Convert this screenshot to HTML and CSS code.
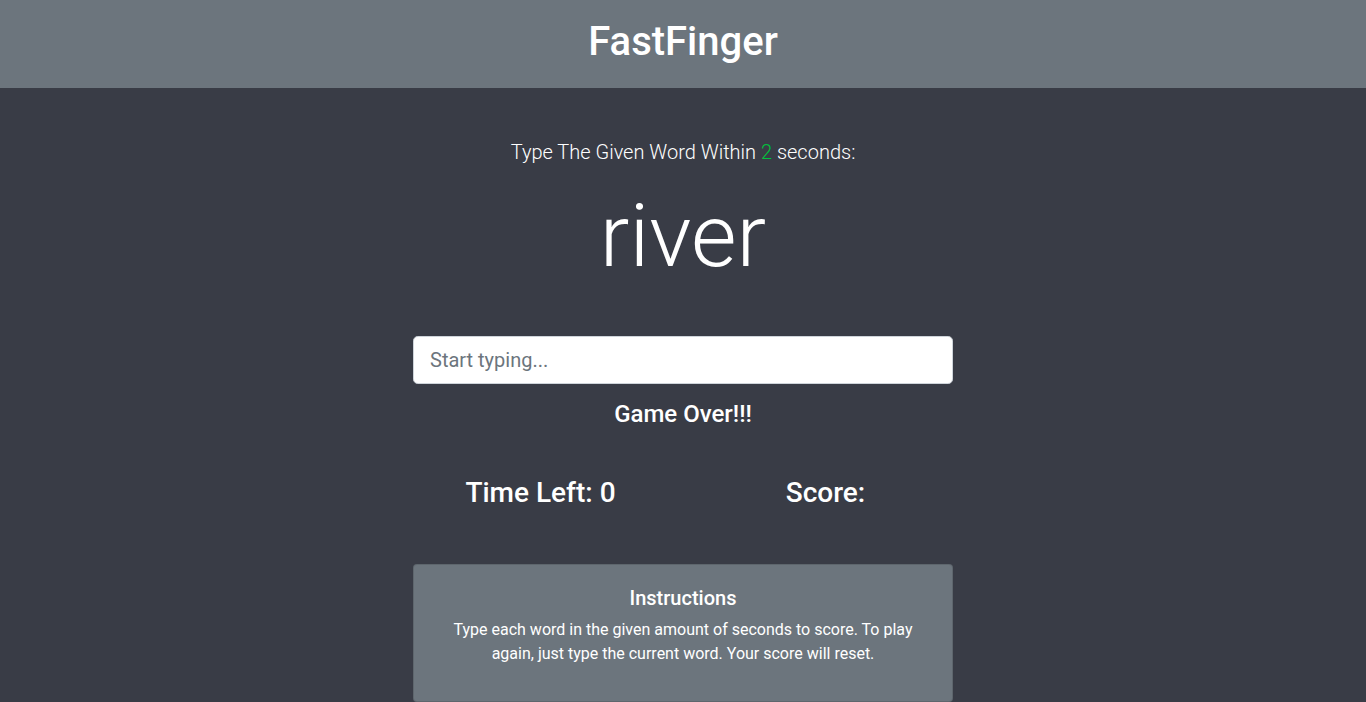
FILE: index.html
```
<!DOCTYPE html>
<html lang="en">
<head>
<meta charset="utf-8">
<title>FastFinger</title>
<link rel="stylesheet" href="styles.css">
</head>
<body>
<header class="topbar">
  <h1 class="brand">FastFinger</h1>
</header>
<main class="container">
  <div class="column">
    <p class="lead">Type The Given Word Within <span class="secs">2</span> seconds:</p>
    <h2 class="word">river</h2>
    <input class="word-input" type="text" placeholder="Start typing...">
    <h4 class="message">Game Over!!!</h4>
  </div>
  <div class="stats">
    <h3 class="stat">Time Left: <span>0</span></h3>
    <h3 class="stat">Score: <span></span></h3>
  </div>
  <div class="column">
    <section class="card">
      <h5 class="card-title">Instructions</h5>
      <p class="card-text">Type each word in the given amount of seconds to score. To play again, just type the current word. Your score will reset.</p>
    </section>
  </div>
</main>
</body>
</html>
```
FILE: styles.css
```
* { box-sizing: border-box; }
html, body { margin: 0; padding: 0; }
body {
  background: #393c46;
  color: #fff;
  font-family: Roboto, "Noto Sans", sans-serif;
  font-size: 16px;
  line-height: 1.5;
}
.topbar {
  background: #6c757d;
  padding: 18px 0 22px;
  text-align: center;
}
.brand {
  margin: 0;
  font-size: 40px;
  font-weight: 500;
  line-height: 1.2;
}
.container {
  width: 1140px;
  margin: 0 auto;
  padding-top: 49px;
}
.column {
  width: 540px;
  margin: 0 auto;
  text-align: center;
}
.lead {
  margin: 0 0 16px;
  font-size: 20px;
  font-weight: 300;
  line-height: 1.5;
}
.secs { color: #00c23c; }
.word {
  margin: 3px 0 47px;
  font-size: 88px;
  font-weight: 300;
  line-height: 1.2;
}
.word-input {
  display: block;
  width: 100%;
  height: 48px;
  padding: 8px 16px;
  font-family: inherit;
  font-size: 20px;
  line-height: 1.5;
  color: #495057;
  background: #fff;
  border: 1px solid #ced4da;
  border-radius: 4.8px;
  outline: none;
}
.word-input::placeholder { color: #6c757d; }
.message {
  margin: 16px 0 0;
  font-size: 24px;
  font-weight: 500;
  line-height: 1.2;
}
.stats {
  display: grid;
  grid-template-columns: 285px 285px;
  justify-content: center;
  margin-top: 48px;
}
.stat {
  margin: 0;
  font-size: 28px;
  font-weight: 500;
  line-height: 1.2;
  text-align: center;
}
.card {
  margin-top: 54px;
  background: #6c757d;
  border: 1px solid rgba(0,0,0,0.125);
  border-radius: 4px;
  padding: 21px 20px 19px;
}
.card-title {
  margin: 0 0 8px;
  font-size: 20px;
  font-weight: 500;
  line-height: 1.2;
}
.card-text {
  margin: 0 0 16px;
  padding: 0 18px;
}
```
